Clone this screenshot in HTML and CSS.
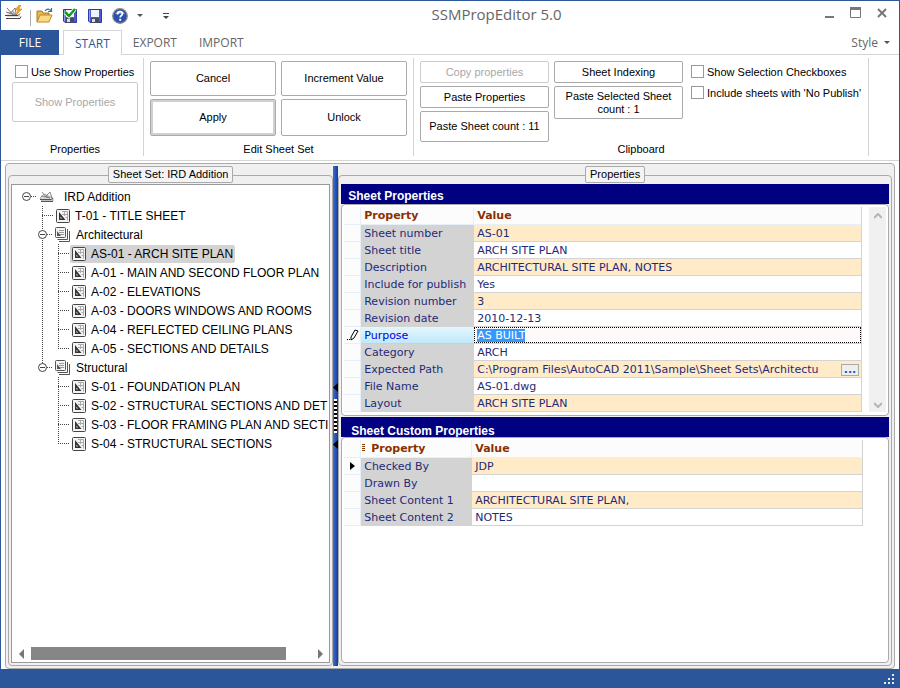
FILE: index.html
```html
<!DOCTYPE html>
<html lang="en">
<head>
  <meta charset="UTF-8">
  <title>SSMPropEditor 5.0</title>
  <link rel="stylesheet" href="styles.css">
</head>
<body>

  <!-- Shared icons -->
  <svg class="sprite" width="0" height="0">
    <symbol id="i-set" viewBox="0 0 16 16">
      <path d="M1 9l4-4 9 4v3H3z" fill="#ddd" stroke="#999" stroke-width=".8"/>
      <path d="M3 3l5 6M6 8l5-5M7 7l4 2M11 3l2 6M2 7l9 2" stroke="#888" fill="none"/>
      <path d="M1 10.500h11l2-1M2 12.500h12" stroke="#555" fill="none"/>
    </symbol>
    <symbol id="i-sheet" viewBox="0 0 14 14">
      <rect x=".5" y=".5" width="13" height="13" rx="1" fill="#f4f4f4" stroke="#444"/>
      <path d="M3 3v8h6.500z" fill="#333"/>
      <path d="M4.500 7.500v2h1.500z" fill="#fff"/>
      <path d="M6 2.500h5.500v9M8.500 2v5M6 5.500h5M9.500 8.500h2" fill="none" stroke="#aaa"/>
    </symbol>
    <symbol id="i-subset" viewBox="0 0 16 16">
      <path d="M4 14.500h10.500V4M2.500 12.500h10V2" fill="none" stroke="#555"/>
      <rect x=".5" y=".5" width="10" height="10" rx="1" fill="#f4f4f4" stroke="#555"/>
      <path d="M4 3.500h5M4 5.500h5M4 7.500h5" stroke="#999"/>
      <path d="M2 9V4l4 5z" fill="#555"/>
    </symbol>
    <symbol id="i-disk" viewBox="0 0 16 16">
      <path d="M1.500 1.500h13v13H3l-1.500-1.500z" fill="#4a5cd0" stroke="#2c3aa0"/>
      <path d="M2.500 2v11" stroke="#8f9cf0"/>
      <rect x="4" y="2" width="8" height="7" fill="#eef2ff"/>
      <rect x="4" y="10" width="8" height="5" fill="#444c66"/>
      <rect x="5" y="11" width="3" height="3" fill="#ddd"/>
    </symbol>
  </svg>

  <div class="window">
    <header class="titlebar">
      <div class="quick-access">
        <svg class="app-icon" width="17" height="16" viewBox="0 0 17 16">
          <path d="M1 10l4-4 10 4v2H2z" fill="#ddd"/>
          <path d="M2 3l6 7M5 9l5-6M1 7l10 3M7 6l5 4M10 3l1 5" stroke="#777" fill="none"/>
          <path d="M0 10.500h13l2-2M1 13.500h14l1-2" stroke="#444" fill="none"/>
          <path d="M14 0l-4 5h3l-2 5 6-6h-3l2-4z" fill="#f5a623" stroke="#c87b10" stroke-width=".5"/>
        </svg>
        <span class="divider"></span>
        <button type="button" class="tool" aria-label="Open">
          <svg width="17" height="16" viewBox="0 0 17 16">
            <path d="M1 14V3h5l1 2h6v3" fill="#e9b64f" stroke="#a87a20"/>
            <path d="M1 14L4 7h12l-3 7z" fill="#fbd983" stroke="#b98a2c"/>
            <path d="M9 3c2-3 5-2 6 0M15.500 0v3.500H12" fill="none" stroke="#3b6f9c" stroke-width="1.200"/>
          </svg>
        </button>
        <button type="button" class="tool" aria-label="Save and close">
          <svg width="16" height="16" viewBox="0 0 16 16">
            <use href="#i-disk"/>
            <path d="M3 4l4 4 6-7" fill="none" stroke="#fff" stroke-width="4"/>
            <path d="M3 4l4 4 6-7" fill="none" stroke="#179a17" stroke-width="2.500"/>
          </svg>
        </button>
        <button type="button" class="tool" aria-label="Save"><svg width="16" height="16"><use href="#i-disk"/></svg></button>
        <button type="button" class="tool" aria-label="Help">
          <svg width="16" height="16" viewBox="0 0 16 16">
            <circle cx="8" cy="8" r="7.300" fill="#2b4fae" stroke="#8c8c8c" stroke-width="1.300"/>
            <path d="M3 6a5.500 5.500 0 0 1 10 0z" fill="#6f92dd"/>
            <path d="M5.500 6.500c0-4 5-3.500 5-.8 0 1.700-2.300 1.800-2.300 3.800" fill="none" stroke="#fff" stroke-width="1.800"/>
            <rect x="7.200" y="10.800" width="2" height="2" fill="#fff"/>
          </svg>
        </button>
        <button type="button" class="tool caret" aria-label="More help"><svg width="6" height="3"><path d="M0 0h6L3 3z" fill="#555"/></svg></button>
        <button type="button" class="tool customize" aria-label="Customize toolbar"><svg width="6" height="6"><path d="M0 .5h6" stroke="#444"/><path d="M0 3h6L3 6z" fill="#444"/></svg></button>
      </div>
      <h1>SSMPropEditor 5.0</h1>
      <div class="window-buttons">
        <button type="button" aria-label="Minimize"><svg width="10" height="12"><path d="M1 10h9" stroke="#777" stroke-width="2"/></svg></button>
        <button type="button" aria-label="Maximize"><svg width="11" height="12"><path d="M.5 1v9.500h10V1" fill="none" stroke="#777"/><path d="M0 1.500h11" stroke="#777" stroke-width="3"/></svg></button>
        <button type="button" aria-label="Close"><svg width="10" height="12"><path d="M1 2l8 8M9 2l-8 8" stroke="#777" stroke-width="2"/></svg></button>
      </div>
    </header>

    <nav class="tabs">
      <button type="button" class="tab file">FILE</button>
      <button type="button" class="tab active">START</button>
      <button type="button" class="tab">EXPORT</button>
      <button type="button" class="tab">IMPORT</button>
      <button type="button" class="style-menu">Style <svg width="6" height="3"><path d="M0 0h6L3 3z" fill="#555"/></svg></button>
    </nav>

    <div class="ribbon">
      <section class="ribbon-group show-group">
        <div class="group-body">
          <label class="check"><input type="checkbox">Use Show Properties</label>
          <button type="button" class="btn big" disabled>Show Properties</button>
        </div>
        <h2>Properties</h2>
      </section>
      <section class="ribbon-group">
        <div class="group-body edit-grid">
          <button type="button" class="btn">Cancel</button>
          <button type="button" class="btn">Increment Value</button>
          <button type="button" class="btn default">Apply</button>
          <button type="button" class="btn">Unlock</button>
        </div>
        <h2>Edit Sheet Set</h2>
      </section>
      <section class="ribbon-group">
        <div class="group-body clipboard">
          <div class="stack">
            <button type="button" class="btn small" disabled>Copy properties</button>
            <button type="button" class="btn small">Paste Properties</button>
            <button type="button" class="btn medium">Paste Sheet count : 11</button>
          </div>
          <div class="stack">
            <button type="button" class="btn small">Sheet Indexing</button>
            <button type="button" class="btn tall">Paste Selected Sheet count : 1</button>
          </div>
          <div class="checks">
            <label class="check"><input type="checkbox">Show Selection Checkboxes</label>
            <label class="check"><input type="checkbox">Include sheets with 'No Publish'</label>
          </div>
        </div>
        <h2>Clipboard</h2>
      </section>
    </div>

    <main class="workspace">
      <section class="pane">
        <h2 class="pane-title">Sheet Set: IRD Addition</h2>
        <div class="tree-box">
          <ul class="tree">
            <li>
              <div class="row"><button type="button" class="expander" aria-label="Collapse"></button><span class="node root"><svg width="16" height="16"><use href="#i-set"/></svg>IRD Addition</span></div>
              <ul class="children sets">
                <li><div class="row"><span class="node"><svg width="14" height="14"><use href="#i-sheet"/></svg>T-01 - TITLE SHEET</span></div></li>
                <li>
                  <div class="row"><button type="button" class="expander" aria-label="Collapse"></button><span class="node"><svg width="16" height="16"><use href="#i-subset"/></svg>Architectural</span></div>
                  <ul class="children">
                    <li><div class="row"><span class="node selected"><svg width="14" height="14"><use href="#i-sheet"/></svg>AS-01 - ARCH SITE PLAN</span></div></li>
                    <li><div class="row"><span class="node"><svg width="14" height="14"><use href="#i-sheet"/></svg>A-01 - MAIN AND SECOND FLOOR PLAN</span></div></li>
                    <li><div class="row"><span class="node"><svg width="14" height="14"><use href="#i-sheet"/></svg>A-02 - ELEVATIONS</span></div></li>
                    <li><div class="row"><span class="node"><svg width="14" height="14"><use href="#i-sheet"/></svg>A-03 - DOORS WINDOWS AND ROOMS</span></div></li>
                    <li><div class="row"><span class="node"><svg width="14" height="14"><use href="#i-sheet"/></svg>A-04 - REFLECTED CEILING PLANS</span></div></li>
                    <li><div class="row"><span class="node"><svg width="14" height="14"><use href="#i-sheet"/></svg>A-05 - SECTIONS AND DETAILS</span></div></li>
                  </ul>
                </li>
                <li>
                  <div class="row"><button type="button" class="expander" aria-label="Collapse"></button><span class="node"><svg width="16" height="16"><use href="#i-subset"/></svg>Structural</span></div>
                  <ul class="children">
                    <li><div class="row"><span class="node"><svg width="14" height="14"><use href="#i-sheet"/></svg>S-01 - FOUNDATION PLAN</span></div></li>
                    <li><div class="row"><span class="node"><svg width="14" height="14"><use href="#i-sheet"/></svg>S-02 - STRUCTURAL SECTIONS AND DET</span></div></li>
                    <li><div class="row"><span class="node"><svg width="14" height="14"><use href="#i-sheet"/></svg>S-03 - FLOOR FRAMING PLAN AND SECTI</span></div></li>
                    <li><div class="row"><span class="node"><svg width="14" height="14"><use href="#i-sheet"/></svg>S-04 - STRUCTURAL SECTIONS</span></div></li>
                  </ul>
                </li>
              </ul>
            </li>
          </ul>
          <div class="hscroll">
            <svg width="5" height="10"><path d="M5 0v10L0 5z" fill="#777"/></svg>
            <div class="track"><div class="thumb"></div></div>
            <svg width="5" height="10"><path d="M0 0v10l5-5z" fill="#777"/></svg>
          </div>
        </div>
      </section>

      <div class="splitter">
        <svg width="5" height="9"><path d="M5 0v9L0 4.500z" fill="#000"/></svg>
        <span class="grip"></span>
        <svg width="5" height="9"><path d="M5 0v9L0 4.500z" fill="#000"/></svg>
      </div>

      <section class="pane">
        <h2 class="pane-title">Properties</h2>
        <h3 class="bar">Sheet Properties</h3>
        <div class="grid-box">
          <table class="props">
            <colgroup><col class="c-mark"><col class="c-name"><col></colgroup>
            <thead>
              <tr><th></th><th>Property</th><th>Value</th></tr>
            </thead>
            <tbody>
              <tr><td></td><th scope="row">Sheet number</th><td>AS-01</td></tr>
              <tr><td></td><th scope="row">Sheet title</th><td>ARCH SITE PLAN</td></tr>
              <tr><td></td><th scope="row">Description</th><td>ARCHITECTURAL SITE PLAN, NOTES</td></tr>
              <tr><td></td><th scope="row">Include for publish</th><td>Yes</td></tr>
              <tr><td></td><th scope="row">Revision number</th><td>3</td></tr>
              <tr><td></td><th scope="row">Revision date</th><td>2010-12-13</td></tr>
              <tr class="editing">
                <td><svg width="12" height="12" viewBox="0 0 12 12"><path d="M4 8l4-7 3 1-4 7-3 2zM0 10.500h1M2 10.500h1" fill="#fff" stroke="#000"/></svg></td>
                <th scope="row"><label for="purpose">Purpose</label></th>
                <td><input type="text" id="purpose" value="AS BUILT"></td>
              </tr>
              <tr><td></td><th scope="row">Category</th><td>ARCH</td></tr>
              <tr><td></td><th scope="row">Expected Path</th><td><div class="path"><span>C:\Program Files\AutoCAD 2011\Sample\Sheet Sets\Architectu</span><button type="button" aria-label="Browse">...</button></div></td></tr>
              <tr><td></td><th scope="row">File Name</th><td>AS-01.dwg</td></tr>
              <tr><td></td><th scope="row">Layout</th><td>ARCH SITE PLAN</td></tr>
            </tbody>
          </table>
          <div class="vscroll">
            <svg width="8" height="6"><path d="M0 5l4-4 4 4" fill="none" stroke="#b5b5b5" stroke-width="2"/></svg>
            <svg width="8" height="6"><path d="M0 1l4 4 4-4" fill="none" stroke="#b5b5b5" stroke-width="2"/></svg>
          </div>
        </div>
        <h3 class="bar indented">Sheet Custom Properties</h3>
        <div class="grid-box fill">
          <table class="props custom">
            <colgroup><col class="c-mark"><col class="c-name"><col></colgroup>
            <thead>
              <tr><th></th><th><svg width="10" height="8"><path d="M1 .5h3M1 2.500h3M1 4.500h3M1 6.500h3" stroke="#8b3a00"/></svg>Property</th><th>Value</th></tr>
            </thead>
            <tbody>
              <tr><td><svg width="5" height="8"><path d="M0 0v8l5-4z"/></svg></td><th scope="row">Checked By</th><td>JDP</td></tr>
              <tr><td></td><th scope="row">Drawn By</th><td></td></tr>
              <tr><td></td><th scope="row">Sheet Content 1</th><td>ARCHITECTURAL SITE PLAN,</td></tr>
              <tr><td></td><th scope="row">Sheet Content 2</th><td>NOTES</td></tr>
            </tbody>
          </table>
        </div>
      </section>
    </main>

    <footer class="statusbar">
      <svg width="11" height="11" fill="#f0ece0"><path d="M8 0h2v2H8zM4 4h2v2H4zM8 4h2v2H8zM0 8h2v2H0zM4 8h2v2H4zM8 8h2v2H8z"/></svg>
    </footer>
  </div>

  <script>
    // open with the edited cell selected
    const purpose = document.getElementById("purpose");
    purpose.focus();
    purpose.select();
  </script>
</body>
</html>
```
FILE: styles.css
```css
* {
  box-sizing: border-box;
}
body {
  margin: 0;
  font-family: "Liberation Sans", Arial, sans-serif;
  font-size: 11px;
  color: #000;
  background: #fff;
}
h1, h2, h3, ul {
  margin: 0;
  padding: 0;
  font-weight: normal;
}
ul {
  list-style: none;
}
svg {
  display: block;
  flex: none;
}
button {
  font: inherit;
  color: inherit;
  background: none;
  border: 0;
  padding: 0;
}
.sprite {
  position: absolute;
}
.window {
  display: flex;
  flex-direction: column;
  min-height: 100vh;
  border: 1px solid #2b579a;
}

/* Title bar */
.titlebar {
  display: flex;
  height: 29px;
}
.quick-access {
  display: flex;
  align-items: center;
  padding-left: 4px;
}
.app-icon {
  margin-bottom: 6px;
}
.divider {
  width: 1px;
  height: 16px;
  margin: 4px 5px 0 8px;
  background: #aaa;
}
.tool {
  margin-right: 9px;
}
.caret {
  margin-right: 20px;
}
.customize {
  margin-right: 0;
}
.titlebar h1 {
  flex: 1;
  font: 15px/27px "Open Sans", "Noto Sans", sans-serif;
  color: #666;
  text-align: center;
}
.window-buttons {
  display: flex;
  gap: 16px;
  padding: 6px 12px 0 0;
  align-items: flex-start;
}

/* Tabs */
.tabs {
  display: flex;
  height: 25px;
  font: 12px/25px "Open Sans", "Noto Sans", sans-serif;
  color: #666;
  border-bottom: 1px solid #d4d4d4;
}
.tab {
  padding: 0 11px;
}
.tab.file {
  width: 58px;
  height: 25px;
  margin-right: 4px;
  color: #fff;
  background: #2b579a;
}
.tab.active {
  height: 25px;
  color: #2b579a;
  background: #fff;
  border: 1px solid #d4d4d4;
  border-bottom: 0;
}
.style-menu {
  display: flex;
  align-items: center;
  gap: 6px;
  margin-left: auto;
  padding-right: 9px;
}

/* Ribbon */
.ribbon {
  display: flex;
  padding: 3px 0 4px 5px;
  border-bottom: 1px solid #d4d4d4;
}
.ribbon-group {
  display: flex;
  flex-direction: column;
  justify-content: space-between;
  min-height: 98px;
  padding: 3px 6px 0;
  border-right: 1px solid #d4d4d4;
}
.ribbon-group h2 {
  font-size: 11px;
  line-height: 14px;
  text-align: center;
}
.show-group {
  padding: 3px 5px 0 6px;
}
.edit-grid {
  display: grid;
  grid-template-columns: 126px 126px;
  grid-template-rows: 35px 37px;
  gap: 3px 5px;
}
.clipboard {
  display: flex;
  gap: 5px;
}
.stack {
  display: flex;
  flex-direction: column;
  gap: 3px;
  width: 129px;
}
.btn {
  color: #000;
  line-height: 13px;
  background: #fff;
  border: 1px solid #aaa;
  border-radius: 2px;
}
.btn:disabled {
  color: #a8a8a8;
  border-color: #ccc;
}
.btn.default {
  border: 1px solid #aaa;
  box-shadow: inset 0 0 0 2px #d0d0d0;
}
.btn.big {
  width: 126px;
  height: 40px;
}
.btn.small {
  height: 22px;
}
.btn.medium {
  height: 31px;
}
.btn.tall {
  height: 33px;
  padding: 0 6px;
}
.check {
  display: flex;
  align-items: center;
  gap: 3px;
  height: 21px;
  white-space: nowrap;
}
.check input {
  appearance: none;
  width: 13px;
  height: 13px;
  margin: 0;
  background: #fff;
  border: 1px solid #999;
}
.show-group .check {
  padding: 0 0 0 3px;
}
.checks {
  padding: 0 1px 0 3px;
}

/* Main area */
.workspace {
  flex: 1;
  display: grid;
  grid-template-columns: minmax(0, 37fr) 5px minmax(0, 63fr);
  margin: 2px 4px 0;
  padding: 2px;
  background: #f0f0f0;
  border: 1px solid #aaa;
  border-radius: 4px;
}
.pane {
  display: flex;
  flex-direction: column;
  margin-top: 9px;
  padding: 0 2px 2px;
  border: 1px solid #aaa;
  border-radius: 4px;
}
.pane-title {
  align-self: center;
  height: 17px;
  margin: -10px 0 1px;
  padding: 0 4px;
  font-size: 11px;
  line-height: 15px;
  background: #f4f4f4;
  border: 1px solid #aaa;
  border-radius: 2px;
}
.splitter {
  display: flex;
  flex-direction: column;
  align-items: center;
  justify-content: center;
  gap: 7px;
  background: linear-gradient(90deg, #3f6fd0, #123a9c);
}
.grip {
  width: 3px;
  height: 34px;
  background: repeating-linear-gradient(#fff 0 2px, #000 2px 4px);
}

/* Sheet tree */
.tree-box {
  flex: 1;
  display: flex;
  flex-direction: column;
  justify-content: space-between;
  overflow: hidden;
  background: #fff;
  border: 1px solid #999;
}
.tree {
  padding: 2px 0 0 10px;
  font-size: 12px;
}
.row {
  display: flex;
  align-items: center;
  height: 19px;
}
.node {
  display: flex;
  flex: none;
  align-items: center;
  gap: 5px;
  height: 18px;
  padding: 0 2px;
  line-height: 18px;
  white-space: nowrap;
}
.node.root {
  gap: 9px;
}
.node.selected {
  background: #d3d3d3;
  border-radius: 2px;
}
.row::before {
  content: "";
  flex: none;
  width: 12px;
  height: 1px;
  background: repeating-linear-gradient(90deg, #444 0 1px, transparent 1px 2px);
}
.row:has(.expander)::before {
  order: 1;
  width: 6px;
}
.row:has(.expander) .node {
  order: 2;
}
.expander {
  flex: none;
  width: 9px;
  height: 9px;
  background: linear-gradient(#444, #444) center / 5px 1px no-repeat #fff;
  border: 1px solid #444;
  border-radius: 50%;
}
.children {
  margin-left: 16px;
  background: repeating-linear-gradient(#444 0 1px, transparent 1px 2px) 0 0 / 1px calc(100% - 9px) no-repeat;
}
.sets {
  margin-left: 20px;
  background-size: 1px calc(100% - 85px);
}
.sets > li > .row .expander {
  margin-left: -4px;
}
.hscroll {
  display: flex;
  align-items: center;
  gap: 7px;
  padding: 0 6px 2px 7px;
}
.track {
  flex: 1;
}
.thumb {
  width: 91%;
  height: 13px;
  background: #868686;
}

/* Property grids */
.bar {
  height: 20px;
  padding-left: 7px;
  font-size: 12px;
  font-weight: bold;
  line-height: 24px;
  color: #fff;
  background: #000080;
}
.bar.indented {
  margin-top: 1px;
  padding-left: 10px;
  line-height: 28px;
}
.grid-box {
  display: flex;
  align-items: flex-start;
  gap: 7px;
  padding: 2px 2px 3px;
  background: #fff;
  border: 1px solid #aaa;
  border-radius: 4px;
}
.grid-box.fill {
  flex: 1;
  padding-right: 25px;
}
.props {
  flex: 1;
  width: 0;
  table-layout: fixed;
  border-spacing: 0;
  font: 11px/14px "DejaVu Sans", Verdana, sans-serif;
  color: #1e2a78;
}
.props .c-mark {
  width: 17px;
}
.props .c-name {
  width: 113px;
}
.custom .c-name {
  width: 111px;
}
.props th,
.props td {
  height: 17px;
  padding: 2px 0 0 3px;
  font-weight: normal;
  text-align: left;
  white-space: nowrap;
  border-bottom: 1px solid #d3d3d3;
}
.props thead th {
  height: 18px;
  padding-top: 0;
  font-weight: bold;
  color: #8b3000;
  background: #fcfcfc;
  border-right: 1px solid #e6effa;
  border-bottom-color: #e6effa;
}
.props tbody th {
  background: #d3d3d3;
}
.props tbody td:first-child {
  padding-top: 0;
  background: #fcfcfc;
  border-right: 1px solid #e6effa;
  border-bottom-color: #e6effa;
}
.props tr > :last-child {
  border-right: 1px solid #d3d3d3;
}
.props tbody tr:nth-child(odd) td:last-child {
  background: #ffebc8;
}
.custom thead th:nth-child(2) {
  padding-left: 0;
}
.props thead svg {
  display: inline-block;
}
.custom tbody td:first-child {
  padding-left: 6px;
}
.props .editing th {
  color: #0000e0;
  background: linear-gradient(#e4f6ff, #c0e9fb);
  border-bottom-color: #a8dcf5;
}
.props tbody .editing:nth-child(n) td:last-child {
  padding: 0;
  background: #fffafa;
}
.editing input {
  display: block;
  width: 100%;
  height: 16px;
  padding: 0 2px;
  font: inherit;
  color: inherit;
  background: none;
  border: 1px dotted #000;
  outline: 0;
}
.editing input::selection {
  color: #fff;
  background: #3399ff;
}
.path {
  display: flex;
  align-items: center;
  gap: 4px;
  height: 14px;
  padding-right: 2px;
}
.path span {
  flex: 1;
  overflow: hidden;
}
.path button {
  width: 18px;
  height: 12px;
  font-weight: bold;
  line-height: 6px;
  color: #1460a8;
  background: #eee;
  border: 1px solid #aaa;
}
.vscroll {
  align-self: stretch;
  display: flex;
  flex-direction: column;
  align-items: center;
  justify-content: space-between;
  width: 17px;
  padding: 6px 0 4px;
  background: #f0f0f0;
}

/* Status bar */
.statusbar {
  display: flex;
  justify-content: flex-end;
  align-items: flex-end;
  height: 18px;
  padding: 0 4px 2px;
  background: #2b579a;
}
```
